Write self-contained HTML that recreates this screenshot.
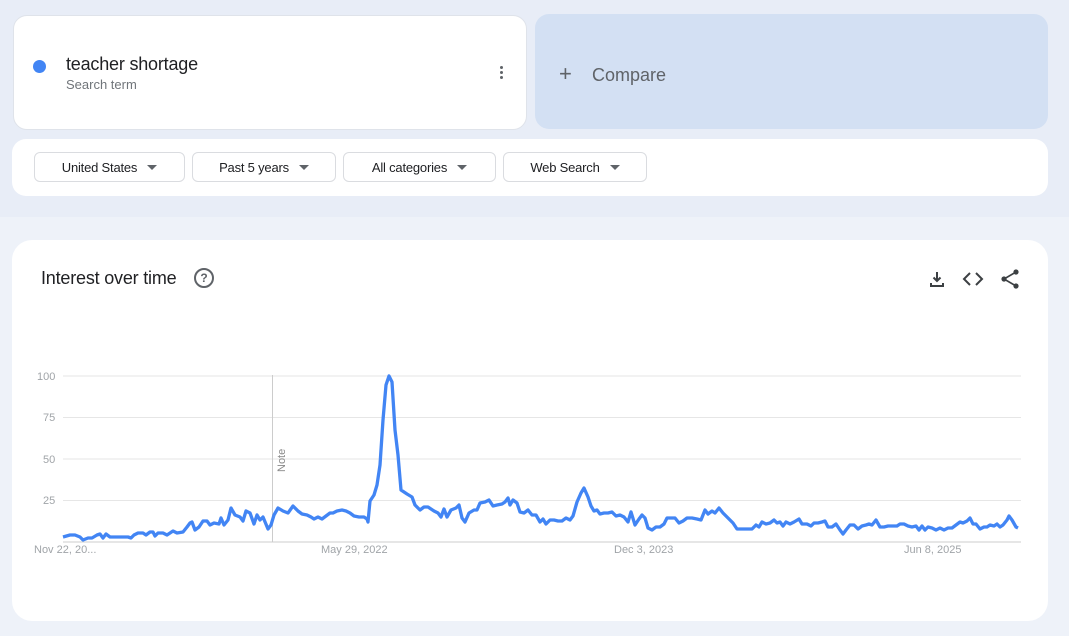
<!DOCTYPE html>
<html><head><style>
body{margin:0;width:1069px;height:636px;overflow:hidden;background:#eef2f9;font-family:"Liberation Sans",Arial,sans-serif;position:relative}
.top{position:absolute;left:0;top:0;width:1069px;height:217px;background:#e8edf7}
.card{position:absolute;background:#fff}
.chip{position:absolute;top:152px;height:30px;border:1px solid #dadce0;border-radius:6px;background:#fff;font-size:13px;color:#202124;display:flex;align-items:center;justify-content:center;gap:10px;box-sizing:border-box;letter-spacing:-0.2px}
.chip i{width:0;height:0;border-left:5px solid transparent;border-right:5px solid transparent;border-top:5px solid #5f6368}
.ax{position:absolute;font-size:11px;color:#a0a4a8}
</style></head><body>
<div class="top"></div>
<div class="card" style="left:13px;top:15px;width:514px;height:115px;border-radius:14px;border:1px solid #dfe3ea;box-sizing:border-box"></div>
<div style="position:absolute;left:33px;top:60px;width:13px;height:13px;border-radius:50%;background:#4285f4"></div>
<div style="position:absolute;left:66px;top:54px;font-size:18px;color:#202124;letter-spacing:-0.2px">teacher shortage</div>
<div style="position:absolute;left:66px;top:77px;font-size:13px;color:#70757a">Search term</div>
<div style="position:absolute;left:500px;top:66px;width:4px">
<div style="width:3px;height:3px;border-radius:50%;background:#5f6368;margin-bottom:2px"></div><div style="width:3px;height:3px;border-radius:50%;background:#5f6368;margin-bottom:2px"></div><div style="width:3px;height:3px;border-radius:50%;background:#5f6368"></div></div>
<div style="position:absolute;left:535px;top:14px;width:513px;height:115px;border-radius:14px;background:#d3e0f3"></div>
<div style="position:absolute;left:559px;top:61px;font-size:22px;color:#5f6368;font-weight:300">+</div>
<div style="position:absolute;left:592px;top:65px;font-size:18px;color:#5f6368">Compare</div>
<div class="card" style="left:12px;top:139px;width:1036px;height:57px;border-radius:14px"></div>
<div class="chip" style="left:34px;width:151px">United States <i></i></div>
<div class="chip" style="left:192px;width:144px">Past 5 years <i></i></div>
<div class="chip" style="left:343px;width:153px">All categories <i></i></div>
<div class="chip" style="left:503px;width:144px">Web Search <i></i></div>
<div class="card" style="left:12px;top:240px;width:1036px;height:381px;border-radius:20px"></div>
<div style="position:absolute;left:41px;top:268px;font-size:18px;color:#202124;letter-spacing:-0.2px">Interest over time</div>
<div style="position:absolute;left:194px;top:268px;width:16px;height:16px;border:2px solid #5f6368;border-radius:50%;font-size:12px;font-weight:bold;color:#5f6368;text-align:center;line-height:16px">?</div>
<svg style="position:absolute;left:928px;top:268px" width="95" height="22" viewBox="0 0 95 22">
<path d="M9 4v9M5.5 9.5l3.5 3.5 3.5-3.5M3 15v3h12v-3" stroke="#3c4043" stroke-width="2" fill="none"/>
<path d="M42 5l-6 6 6 6M48 5l6 6-6 6" stroke="#3c4043" stroke-width="2" fill="none"/>
<circle cx="88" cy="4" r="2.6" fill="#3c4043"/><circle cx="76" cy="11" r="2.6" fill="#3c4043"/><circle cx="88" cy="18" r="2.6" fill="#3c4043"/>
<path d="M88 4L76 11L88 18" stroke="#3c4043" stroke-width="1.6" fill="none"/>
</svg>
<svg style="position:absolute;left:0;top:0" width="1069" height="636">
<g stroke="#e6e6e6" stroke-width="1"><line x1="63" y1="376" x2="1021" y2="376"/><line x1="63" y1="417.5" x2="1021" y2="417.5"/><line x1="63" y1="459" x2="1021" y2="459"/><line x1="63" y1="500.5" x2="1021" y2="500.5"/></g>
<line x1="63" y1="542" x2="1021" y2="542" stroke="#ccc"/>
<line x1="272.5" y1="375" x2="272.5" y2="542" stroke="#ccc"/>
<text transform="translate(285,472) rotate(-90)" font-size="11" fill="#888" font-family="Liberation Sans">Note</text>
<polyline fill="none" stroke="#4285f4" stroke-width="3.3" stroke-linejoin="round" points="63,537 70,535 75,535 80,537 83,540 88,538 92,538 97,535 100,534 103,538 106,534 110,537 128,537 131,538 134,535 138,533 143,533 146,535 150,532 153,532 155,536 158,533 163,533 167,535 173,531 177,533 183,532 187,527 190,523 192,522 195,530 199,527 203,521 207,521 210,525 214,523 219,524 221,518 224,525 228,520 231,508 235,515 240,517 243,521 246,511 250,513 254,524 257,515 260,520 263,517 268,529 271,525 274,515 278,508 283,511 288,513 293,506 298,511 302,514 307,515 311,517 314,519 318,517 322,519 326,516 330,513 333,513 337,511 342,510 346,511 350,513 354,516 359,517 364,517 367,519 368,522 370,501 374,495 377,485 380,465 383,420 386,385 389,376 392,382 395,430 398,455 401,490 407,494 412,497 415,505 420,510 424,507 428,507 431,509 434,511 438,513 441,517 444,509 447,517 451,510 456,508 459,505 462,518 465,522 469,513 474,510 477,510 480,503 485,502 489,500 493,506 497,505 502,504 505,502 508,498 510,505 513,500 517,503 520,512 524,513 528,510 532,515 536,515 540,522 543,519 546,524 550,520 554,520 558,521 562,521 566,518 570,520 573,516 577,502 581,493 584,488 588,497 591,506 594,511 597,510 600,514 604,513 608,513 612,512 616,516 620,515 624,517 628,522 631,512 635,525 639,519 642,515 645,518 648,528 652,530 656,527 660,527 664,524 667,518 672,518 675,518 679,523 683,521 687,518 692,518 697,519 701,520 705,510 708,514 712,511 715,513 719,508 723,513 727,517 733,523 737,529 752,529 756,525 759,527 762,522 766,524 770,523 774,520 777,523 780,522 783,526 786,522 790,524 794,522 799,519 802,524 807,524 811,526 814,523 818,523 822,522 825,521 828,527 832,527 836,524 840,530 843,534 846,530 850,525 854,525 858,529 862,526 866,525 869,524 872,525 876,520 880,527 884,527 888,526 893,526 897,526 900,524 904,524 908,526 912,527 916,526 919,530 922,526 925,530 928,527 932,528 936,530 940,528 944,530 948,528 952,528 956,525 960,522 963,523 967,521 970,518 973,524 976,524 980,529 984,527 987,527 990,525 994,526 997,524 1000,527 1003,525 1007,520 1009,516 1012,520 1016,527 1018,528"/>
</svg>
<div class="ax" style="left:37px;top:371px">100</div>
<div class="ax" style="left:43px;top:412px">75</div>
<div class="ax" style="left:43px;top:454px">50</div>
<div class="ax" style="left:43px;top:495px">25</div>
<div class="ax" style="left:34px;top:544px">Nov 22, 20...</div>
<div class="ax" style="left:321px;top:544px">May 29, 2022</div>
<div class="ax" style="left:614px;top:544px">Dec 3, 2023</div>
<div class="ax" style="left:904px;top:544px">Jun 8, 2025</div>
</body></html>
